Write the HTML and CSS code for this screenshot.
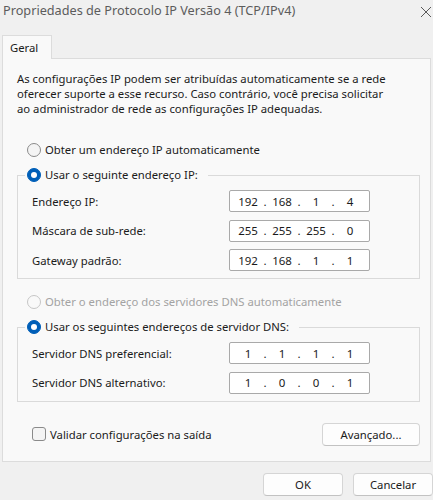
FILE: index.html
```html
<!DOCTYPE html>
<html lang="pt-BR">
<head>
<meta charset="utf-8">
<title>Propriedades de Protocolo IP Versão 4 (TCP/IPv4)</title>
<link rel="stylesheet" href="styles.css">
</head>
<body>
<div class="window">
  <div class="titlebar">
    <span class="title">Propriedades de Protocolo IP Versão 4 (TCP/IPv4)</span>
    <svg class="close" width="12" height="12" viewBox="0 0 12 12"><path d="M1 1 L11 11 M11 1 L1 11" stroke="#5a5a5a" stroke-width="1" fill="none"/></svg>
  </div>
  <div class="tabs"><div class="tab">Geral</div></div>
  <div class="panel">
    <p class="intro">As configurações IP podem ser atribuídas automaticamente se a rede<br>oferecer suporte a esse recurso. Caso contrário, você precisa solicitar<br>ao administrador de rede as configurações IP adequadas.</p>

    <label class="radio first"><span class="dot"></span>Obter um endereço IP automaticamente</label>

    <fieldset class="group">
      <legend><label class="radio"><span class="dot checked"></span>Usar o seguinte endereço IP:</label></legend>
      <div class="rows">
        <div class="row"><span class="lbl">Endereço IP:</span><div class="ip"><span>192</span><i>.</i><span>168</span><i>.</i><span>1</span><i>.</i><span>4</span></div></div>
        <div class="row"><span class="lbl">Máscara de sub-rede:</span><div class="ip"><span>255</span><i>.</i><span>255</span><i>.</i><span>255</span><i>.</i><span>0</span></div></div>
        <div class="row"><span class="lbl">Gateway padrão:</span><div class="ip"><span>192</span><i>.</i><span>168</span><i>.</i><span>1</span><i>.</i><span>1</span></div></div>
      </div>
    </fieldset>

    <label class="radio disabled second"><span class="dot"></span>Obter o endereço dos servidores DNS automaticamente</label>

    <fieldset class="group">
      <legend><label class="radio"><span class="dot checked"></span>Usar os seguintes endereços de servidor DNS:</label></legend>
      <div class="rows">
        <div class="row"><span class="lbl">Servidor DNS preferencial:</span><div class="ip"><span>1</span><i>.</i><span>1</span><i>.</i><span>1</span><i>.</i><span>1</span></div></div>
        <div class="row"><span class="lbl">Servidor DNS alternativo:</span><div class="ip"><span>1</span><i>.</i><span>0</span><i>.</i><span>0</span><i>.</i><span>1</span></div></div>
      </div>
    </fieldset>

    <div class="footer-row">
      <label class="check"><span class="box"></span>Validar configurações na saída</label>
      <button class="btn adv">Avançado...</button>
    </div>
  </div>
  <div class="actions">
    <button class="btn">OK</button>
    <button class="btn">Cancelar</button>
  </div>
</div>
</body>
</html>
```
FILE: styles.css
```css
* { box-sizing: border-box; }
html, body { margin: 0; padding: 0; }
body {
  background: #f0f0f0;
  font-family: "Segoe UI", "Noto Sans", "Open Sans", sans-serif;
  font-size: 11.3px;
  color: #1b1b1b;
  width: 433px;
  height: 500px;
  overflow: hidden;
}
.window { width: 433px; height: 500px; display: flex; flex-direction: column; }
.titlebar {
  height: 35px;
  display: flex;
  align-items: flex-start;
  justify-content: space-between;
  padding: 2px 1px 0 3px;
}
.title { font-size: 12.7px; color: #5c5c5c; line-height: 17px; }
.close { margin-top: 4px; }
.tabs { display: flex; padding-left: 2px; height: 23px; }
.tab {
  width: 50px;
  height: 24px;
  background: #f9f9f9;
  border: 1px solid #dcdcdc;
  border-bottom: none;
  padding: 4px 0 0 7px;
  line-height: 15px;
  position: relative;
  z-index: 1;
}
.panel {
  margin: 0 2px 0 2px;
  background: #f9f9f9;
  border: 1px solid #dcdcdc;
  padding: 12px 10px 15px 14px;
  height: 404px;
}
.intro { margin: 0; line-height: 15px; }
.radio { display: flex; align-items: center; gap: 4px; line-height: 16px; height: 16px; }
.radio.first { margin: 26px 0 0 10px; }
.radio.second { margin: 15px 0 0 10px; }
.dot {
  width: 14px; height: 14px; border-radius: 50%;
  border: 1px solid #8a8a8a;
  background: #f4f4f4;
  flex: none;
  display: flex; align-items: center; justify-content: center;
}
.dot.checked { background: #005fb8; border-color: #005fb8; }
.dot.checked::after { content: ""; width: 6px; height: 6px; border-radius: 50%; background: #fff; }
.radio.disabled { color: #a3a3a3; }
.radio.disabled .dot { border-color: #c6c6c6; background: #f9f9f9; }
.group {
  margin: 9px 0 0 0;
  border: 1px solid #dadada;
  padding: 7px 0 7px 14px;
}
.group legend { padding: 0 10px 0 2px; margin-left: -7px; }
.rows { display: flex; flex-direction: column; gap: 7.5px; }
.row { display: grid; grid-template-columns: 197px 141px; align-items: center; height: 22px; }
.ip {
  height: 22px;
  background: #fff;
  border: 1px solid #a9a9a9;
  border-radius: 2px;
  display: flex;
  align-items: center;
  padding-left: 5px;
  font-size: 11.5px;
}
.ip span { width: 26px; text-align: center; }
.ip i { font-style: normal; width: 8px; text-align: center; }
.footer-row {
  margin-top: 21px;
  display: flex;
  justify-content: space-between;
  align-items: center;
  padding-left: 15px;
}
.check { display: flex; align-items: center; gap: 4px; }
.box {
  width: 14px; height: 14px; border: 1px solid #8a8a8a; border-radius: 3px; background: #f4f4f4;
}
.btn {
  font: inherit;
  color: #1b1b1b;
  background: #fdfdfd;
  border: 1px solid #d5d5d5;
  border-bottom-color: #c2c2c2;
  border-radius: 4px;
  height: 23px;
  padding: 0;
}
.adv { width: 98px; }
.actions {
  display: flex;
  justify-content: flex-end;
  gap: 10px;
  padding-top: 11px;
}
.actions .btn { width: 80px; }
```
